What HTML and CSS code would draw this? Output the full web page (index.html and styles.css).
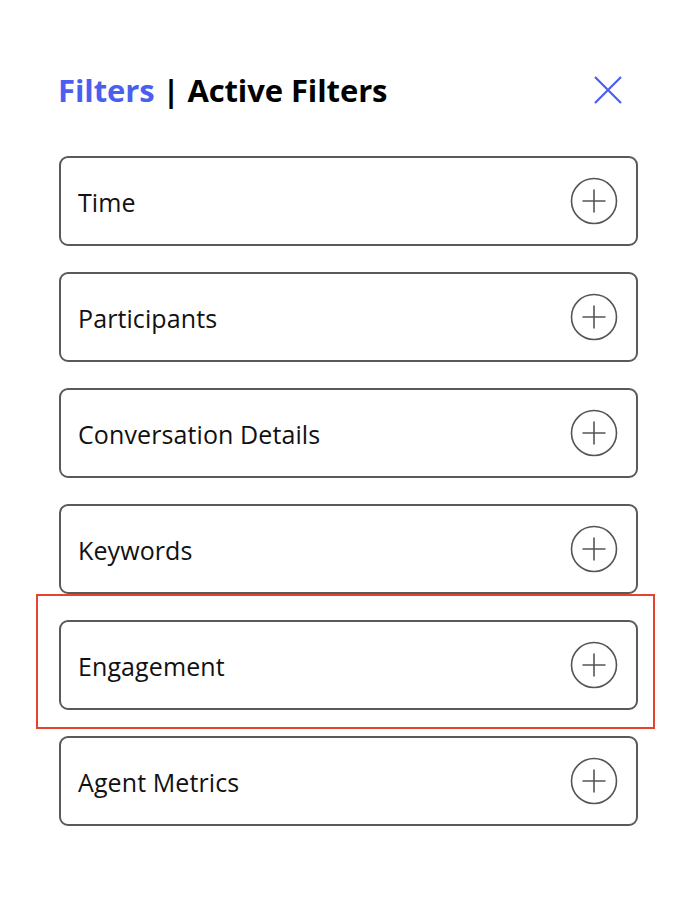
FILE: index.html
```html
<!DOCTYPE html>
<html>
<head>
<meta charset="utf-8">
<link rel="stylesheet" href="styles.css">
</head>
<body>
<div class="panel">
  <div class="header">
    <h1 class="title"><span class="accent">Filters</span> | Active Filters</h1>
    <button class="close" aria-label="Close">
      <svg width="28" height="28" viewBox="0 0 28 28"><path d="M1 1 L27 27 M27 1 L1 27" stroke="#4a5ff0" stroke-width="2.2" fill="none"/></svg>
    </button>
  </div>
  <div class="list">
    <div class="card"><span class="label">Time</span><span class="plus"><svg width="48" height="48" viewBox="0 0 48 48"><circle cx="24" cy="24" r="22.5" stroke="#555" stroke-width="1.6" fill="none"/><path d="M12.5 24 H35.5 M24 12.5 V35.5" stroke="#555" stroke-width="1.6"/></svg></span></div>
    <div class="card"><span class="label">Participants</span><span class="plus"><svg width="48" height="48" viewBox="0 0 48 48"><circle cx="24" cy="24" r="22.5" stroke="#555" stroke-width="1.6" fill="none"/><path d="M12.5 24 H35.5 M24 12.5 V35.5" stroke="#555" stroke-width="1.6"/></svg></span></div>
    <div class="card"><span class="label">Conversation Details</span><span class="plus"><svg width="48" height="48" viewBox="0 0 48 48"><circle cx="24" cy="24" r="22.5" stroke="#555" stroke-width="1.6" fill="none"/><path d="M12.5 24 H35.5 M24 12.5 V35.5" stroke="#555" stroke-width="1.6"/></svg></span></div>
    <div class="card"><span class="label">Keywords</span><span class="plus"><svg width="48" height="48" viewBox="0 0 48 48"><circle cx="24" cy="24" r="22.5" stroke="#555" stroke-width="1.6" fill="none"/><path d="M12.5 24 H35.5 M24 12.5 V35.5" stroke="#555" stroke-width="1.6"/></svg></span></div>
    <div class="card highlighted"><span class="label">Engagement</span><span class="plus"><svg width="48" height="48" viewBox="0 0 48 48"><circle cx="24" cy="24" r="22.5" stroke="#555" stroke-width="1.6" fill="none"/><path d="M12.5 24 H35.5 M24 12.5 V35.5" stroke="#555" stroke-width="1.6"/></svg></span></div>
    <div class="card"><span class="label">Agent Metrics</span><span class="plus"><svg width="48" height="48" viewBox="0 0 48 48"><circle cx="24" cy="24" r="22.5" stroke="#555" stroke-width="1.6" fill="none"/><path d="M12.5 24 H35.5 M24 12.5 V35.5" stroke="#555" stroke-width="1.6"/></svg></span></div>
  </div>
</div>
</body>
</html>
```

FILE: styles.css
```css
html, body {
  margin: 0;
  padding: 0;
  background: #fff;
}
body {
  font-family: "Open Sans", "Noto Sans", sans-serif;
  color: #111;
}
.panel {
  width: 579px;
  padding: 70px 0 0 59px;
}
.header {
  display: flex;
  align-items: center;
  justify-content: space-between;
  height: 40px;
  margin-bottom: 46px;
}
.title {
  margin: 0 0 0 -1px;
  font-size: 31px;
  font-weight: 700;
  line-height: 40px;
  color: #000;
  letter-spacing: -0.1px;
}
.accent {
  color: #4a5ff0;
}
.close {
  border: 0;
  background: none;
  padding: 0;
  margin-right: 16px;
  width: 28px;
  height: 28px;
  display: flex;
}
.list {
  display: flex;
  flex-direction: column;
  gap: 26px;
}
.card {
  position: relative;
  box-sizing: border-box;
  height: 90px;
  border: 2px solid #5a5a5a;
  border-radius: 9px;
  display: flex;
  align-items: center;
  justify-content: space-between;
  padding: 0 18px 0 18px;
}
.label {
  font-size: 25px;
  color: #111;
  padding-top: 2px;
  margin-left: -1px;
  letter-spacing: 0.1px;
}
.plus {
  display: flex;
}
.highlighted::after {
  content: "";
  position: absolute;
  left: -25px;
  right: -19px;
  top: -28px;
  bottom: -21px;
  border: 2.5px solid #e5432d;
  pointer-events: none;
}
```
